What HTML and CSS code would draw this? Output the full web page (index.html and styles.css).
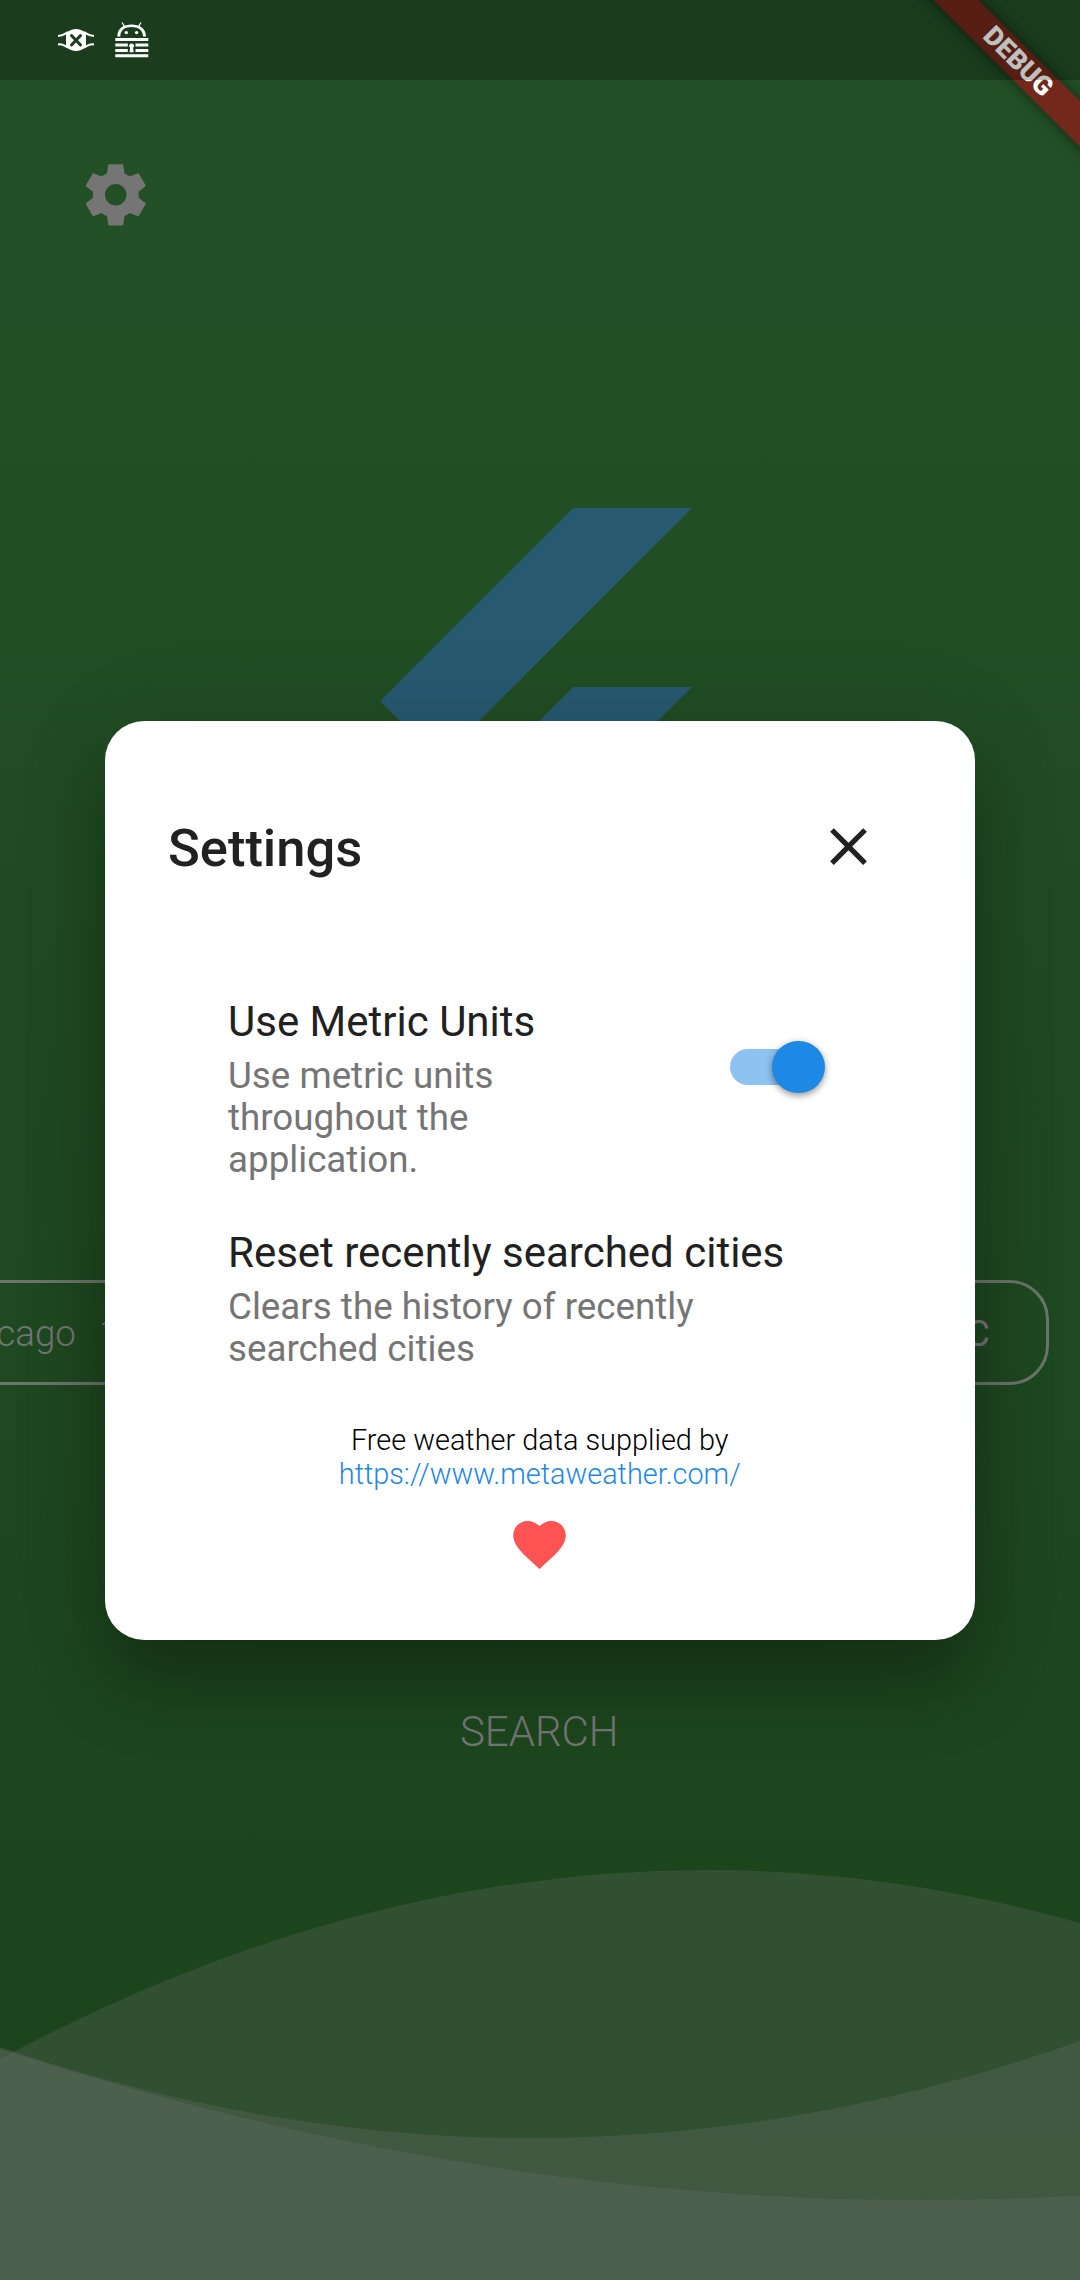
FILE: index.html
```html
<!DOCTYPE html>
<html lang="en">
<head>
<meta charset="utf-8">
<title>Settings</title>
<link rel="stylesheet" href="styles.css">
</head>
<body>
<div class="screen">
  <svg class="layer waves" viewBox="0 0 1080 2280">
    <path class="wave" d="M0 2059Q540 1770 1080 1923V2280H0z"/>
    <path class="wave" d="M0 2047Q540 2232 1080 2041V2280H0z"/>
    <path class="wave" d="M0 2048.500Q540 2226 1080 2195.500V2280H0z"/>
  </svg>

  <main class="layer home">
    <svg class="gear" viewBox="0 0 24 24"><path d="M19.43 12.98c.04-.32.07-.64.07-.98s-.03-.66-.07-.98l2.110-1.650c.19-.15.24-.42.12-.64l-2-3.460c-.12-.22-.39-.3-.61-.22l-2.490 1c-.52-.4-1.080-.73-1.690-.98l-.38-2.650C14.460 2.180 14.250 2 14 2h-4c-.25 0-.46.18-.49.42l-.38 2.650c-.61.25-1.170.59-1.690.98l-2.490-1c-.23-.09-.49 0-.61.22l-2 3.460c-.13.22-.07.49.12.64l2.110 1.650c-.04.32-.07.65-.07.98s.03.66.07.98l-2.110 1.650c-.19.15-.24.42-.12.64l2 3.460c.12.22.39.3.61.22l2.490-1c.52.4 1.080.73 1.690.98l.38 2.650c.03.24.24.42.49.42h4c.25 0 .46-.18.49-.42l.38-2.650c.61-.25 1.170-.59 1.690-.98l2.490 1c.23.09.49 0 .61-.22l2-3.460c.12-.22.07-.49-.12-.64l-2.110-1.650zM12 15.500c-1.930 0-3.500-1.570-3.500-3.500s1.570-3.500 3.500-3.500 3.500 1.570 3.500 3.500-1.570 3.500-3.500 3.500z"/></svg>
    <svg class="logo" viewBox="2.3 0 19.4 24"><path d="M14.314 0L2.300 12 6 15.700 21.700 0zM14.328 11.130L7.857 17.530l6.470 6.470H21.700l-6.460-6.468 6.460-6.402z"/></svg>
    <div class="chip"><span class="recent">Chicago<span class="temp">1</span></span><span class="unit">°C</span></div>
    <div class="search">SEARCH</div>
  </main>

  <section class="layer dialog">
    <header class="head">
      <h1>Settings</h1>
      <svg class="close" viewBox="0 0 24 24"><path d="M19 6.410L17.590 5 12 10.590 6.410 5 5 6.410 10.590 12 5 17.590 6.410 19 12 13.410 17.590 19 19 17.590 13.410 12z"/></svg>
    </header>
    <div class="item">
      <div class="copy narrow">
        <h2>Use Metric Units</h2>
        <p>Use metric units throughout the application.</p>
      </div>
      <div class="switch"><div class="thumb"></div></div>
    </div>
    <div class="item">
      <div class="copy">
        <h2>Reset recently searched cities</h2>
        <p>Clears the history of recently searched cities</p>
      </div>
    </div>
    <footer class="credit">
      <span>Free weather data supplied by</span>
      <a>https://www.metaweather.com/</a>
      <svg class="heart" viewBox="0 0 24 24"><path d="M12 21.350l-1.450-1.320C5.400 15.360 2 12.280 2 8.500 2 5.420 4.420 3 7.500 3c1.740 0 3.410.81 4.500 2.090C13.090 3.810 14.760 3 16.500 3 19.580 3 22 5.420 22 8.500c0 3.780-3.400 6.860-8.550 11.540L12 21.350z"/></svg>
    </footer>
  </section>

  <div class="ribbon">DEBUG</div>

  <div class="layer status">
    <svg class="mask" viewBox="0 0 38 24">
      <path class="strap" d="M1 8C6 8 7 6.500 11 4M1 16.500C6 15.500 7 17.500 11 19.500M37 8C32 8 31 6.500 27 4M37 16.500C32 15.500 31 17.500 27 19.500"/>
      <path class="fill" d="M9 5Q14 1 19 1T29 5V19Q24 23 19 23T9 19z"/>
      <path class="cross" d="M14.500 7.500l9 9.500M23.500 7.500l-9 9.500"/>
    </svg>
    <svg class="droid" viewBox="0 0 34 36">
      <path class="fill" d="M2.300 14.500C2.300 6 9 2.500 16.500 2.500S31 6 31 14.500h-3C28 8 23 5 16.500 5S5.300 8 5.300 14.500z"/>
      <path class="antenna" d="M7 .5l2.500 4M26 .5l-2.500 4"/>
      <circle class="fill" cx="11.300" cy="10.600" r="1.700"/><circle class="fill" cx="21.600" cy="10.600" r="1.700"/>
      <path class="fill" d="M.3 16h33v3H.3zM.3 21.500h12.500v3H.3zM20.500 21.500h12.800v3H20.500zM.3 27h12.500v3H.3zM20.500 27h12.800v3H20.500zM.3 32.300h33v3H.3z"/>
      <path class="fill" d="M16.600 21.500a2.300 2.300 0 0 1 1.500 4.200l.6 4.500h-4.200l.6-4.500a2.300 2.300 0 0 1 1.500-4.200z"/>
    </svg>
  </div>
</div>
</body>
</html>
```
FILE: styles.css
```css
* { box-sizing: border-box; }
body { margin: 0; }
h1, h2, p { margin: 0; font-weight: 400; }
svg { display: block; flex: none; }

.screen {
  position: relative;
  display: grid;
  width: 1080px;
  height: 2280px;
  overflow: hidden;
  font-family: Roboto, "Noto Sans", sans-serif;
  background: linear-gradient(#245127, #1b431b);
}
.layer { grid-area: 1 / 1; min-width: 0; }

.waves { width: 1080px; height: 2280px; }
.wave { fill: rgba(117, 117, 117, .24); }

.home { padding-top: 158px; color: #757575; }
.gear { width: 73.5px; height: 73.5px; margin-left: 78.75px; fill: #757575; }
.logo { width: 312px; height: 386px; margin: 276.5px 0 0 380px; fill: #275970; }
.chip {
  display: flex;
  justify-content: space-between;
  align-items: center;
  width: 1180px;
  height: 105px;
  margin: 386px 0 0 -131px;
  padding: 2px 56px 0 72px;
  border: 3px solid #6c756d;
  border-radius: 39.4px;
  font-size: 36.75px;
  font-weight: 300;
}
.temp { margin-left: 23px; }
.unit { font-weight: 400; }
.search {
  margin: 321.5px 1.5px 0 0;
  line-height: 49px;
  font-size: 42px;
  font-weight: 300;
  text-align: center;
}

.dialog {
  align-self: start;
  width: 870px;
  height: 919px;
  margin: 720.5px 0 0 105px;
  padding: 94px 95px 0 63px;
  border-radius: 39.4px;
  background: #fff;
  box-shadow: 0 42px 76px rgba(0, 0, 0, .3), 0 10px 110px rgba(0, 0, 0, .08);
  color: #212121;
}
.head { display: flex; justify-content: space-between; height: 63px; margin-bottom: 119.3px; }
.head h1 { padding-top: 2px; font-size: 52.5px; font-weight: 500; line-height: 63px; }
.close { width: 63px; height: 63px; fill: #212121; }
.item { display: flex; justify-content: space-between; margin: 0 55.2px 46.7px 60px; }
.item:last-of-type { margin-right: 0; margin-bottom: 53.4px; }
.copy h2 { margin-bottom: 9.3px; font-size: 42px; line-height: 49px; white-space: nowrap; }
.copy p { max-width: 500px; font-size: 36.75px; line-height: 42px; color: #757575; }
.narrow p { max-width: 310px; }
.switch {
  flex: none;
  display: flex;
  align-items: center;
  justify-content: flex-end;
  width: 95px;
  height: 52.5px;
  margin-top: 44px;
}
.switch::before {
  content: "";
  width: 70px;
  height: 36.75px;
  margin-right: -27.5px;
  border-radius: 18.4px 0 0 18.4px;
  background: #8ec3f1;
}
.thumb {
  width: 52.5px;
  height: 52.5px;
  border-radius: 50%;
  background: #1e88e5;
  box-shadow: 0 3px 6px rgba(0, 0, 0, .3), 0 1px 8px rgba(0, 0, 0, .14);
}
.credit {
  display: flex;
  flex-direction: column;
  align-items: center;
  margin-left: 31.5px;
  font-size: 28.875px;
  font-weight: 300;
  line-height: 34px;
  color: #000;
}
.credit a { color: #1e88e5; }
.heart { width: 63px; height: 63px; margin-top: 22px; fill: #ff5252; }

/* Corner banner, laid diagonally over the app. */
.ribbon {
  position: absolute;
  left: 867.75px;
  top: 46.25px;
  width: 300px;
  height: 31.5px;
  transform: rotate(45deg);
  background: rgba(178, 24, 24, .63);
  box-shadow: 0 0 16px rgba(0, 0, 0, .5), inset 0 0 0 16px rgba(0, 0, 0, .08);
  color: #fff;
  font-size: 26.8px;
  font-weight: 900;
  line-height: 31.5px;
  text-align: center;
}

.status {
  position: relative;
  display: flex;
  align-self: start;
  height: 80px;
  padding-left: 57px;
  background: rgba(0, 0, 0, .25);
}
.mask { width: 38px; height: 24px; margin: 28px 19.500px 0 0; }
.droid { width: 34px; height: 36px; margin-top: 22px; }
.status .fill { fill: #fff; }
.strap, .antenna { fill: none; stroke: #fff; stroke-width: 2; }
.antenna { stroke-width: 1.300; }
.cross { stroke: #1c3c1d; stroke-width: 3; stroke-linecap: round; }
```
